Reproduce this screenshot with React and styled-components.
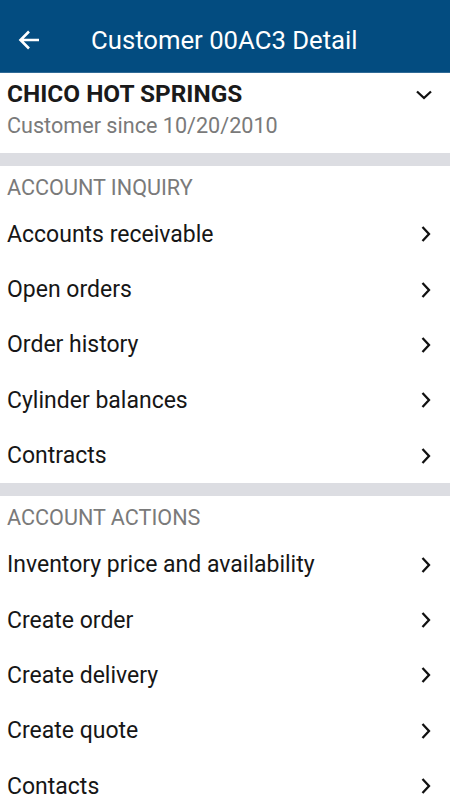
import React from "react";
import styled, { createGlobalStyle } from "styled-components";

const Global = createGlobalStyle`
  body {
    margin: 0;
    font-family: Roboto, "Noto Sans", sans-serif;
    background: #ffffff;
  }
`;

const Screen = styled.div`
  width: 450px;
  height: 800px;
  overflow: hidden;
  background: #ffffff;
`;

const TopBar = styled.div`
  height: 73px;
  padding-top: 7px;
  background: #034c80;
  display: flex;
  align-items: center;
  color: #ffffff;
  border-bottom: 1px solid #2f6a96;
  box-sizing: border-box;
`;

const BackButton = styled.div`
  width: 56px;
  display: flex;
  justify-content: center;
  margin-left: 1px;
`;

const Title = styled.div`
  margin-left: 34px;
  font-size: 25.7px;
`;

const CustomerBlock = styled.div`
  height: 80px;
  padding: 7px 17px 0 7px;
  box-sizing: border-box;
  display: flex;
  justify-content: space-between;
`;

const Name = styled.div`
  font-size: 24.4px;
  font-weight: 700;
  color: #1a1a1a;
  line-height: 28px;
`;

const Since = styled.div`
  font-size: 21.6px;
  color: #7a7a7a;
  margin-top: 5px;
`;

const Band = styled.div`
  height: 12.5px;
  background: #dcdde2;
`;

const SectionLabel = styled.div`
  height: 41px;
  padding-top: 2px;
  box-sizing: border-box;
  display: flex;
  align-items: center;
  padding-left: 7px;
  font-size: 21.6px;
  color: #7a7a7a;
  text-transform: uppercase;
`;

const Row = styled.div`
  height: 55.4px;
  display: flex;
  align-items: center;
  justify-content: space-between;
  padding: 0 15px 0 7px;
  font-size: 23px;
  color: #161616;
`;

const ChevronBox = styled.div`
  padding-top: 6px;
`;

const Chevron = ({ dir = "right" }) => (
  <svg width="18" height="18" viewBox="0 0 18 18" fill="none">
    <path
      d={dir === "right" ? "M5.5 2 L12 9 L5.5 16" : "M2 5.5 L9 12 L16 5.5"}
      stroke="#111"
      strokeWidth="2.3"
    />
  </svg>
);

const inquiry = [
  "Accounts receivable",
  "Open orders",
  "Order history",
  "Cylinder balances",
  "Contracts",
];

const actions = [
  "Inventory price and availability",
  "Create order",
  "Create delivery",
  "Create quote",
  "Contacts",
];

export default function App() {
  return (
    <Screen>
      <Global />
      <TopBar>
        <BackButton>
          <svg width="24" height="24" viewBox="0 0 24 24" fill="none">
            <path d="M22 12 H4 M12 3.5 L3.5 12 L12 20.5" stroke="#fff" strokeWidth="2.6" />
          </svg>
        </BackButton>
        <Title>Customer 00AC3 Detail</Title>
      </TopBar>
      <CustomerBlock>
        <div>
          <Name>CHICO HOT SPRINGS</Name>
          <Since>Customer since 10/20/2010</Since>
        </div>
        <ChevronBox>
          <Chevron dir="down" />
        </ChevronBox>
      </CustomerBlock>
      <Band />
      <SectionLabel>Account inquiry</SectionLabel>
      {inquiry.map((t) => (
        <Row key={t}>
          {t}
          <Chevron />
        </Row>
      ))}
      <Band />
      <SectionLabel>Account actions</SectionLabel>
      {actions.map((t) => (
        <Row key={t}>
          {t}
          <Chevron />
        </Row>
      ))}
    </Screen>
  );
}
